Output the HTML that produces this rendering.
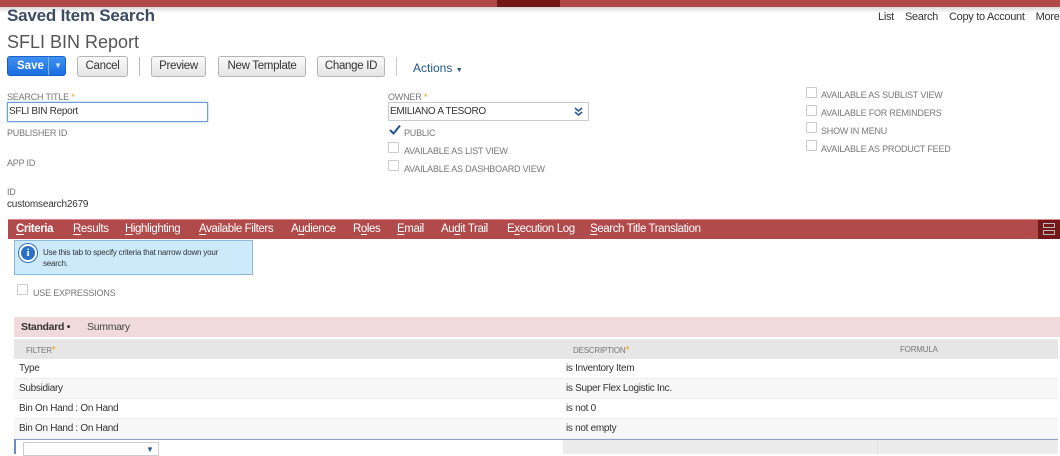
<!DOCTYPE html>
<html><head><style>
*{margin:0;padding:0;box-sizing:border-box}
body{width:1060px;height:454px;overflow:hidden;background:#fff;font-family:"Liberation Sans",sans-serif;position:relative;color:#333}
.a{position:absolute;white-space:nowrap}
.lbl{font-size:9px;color:#777;letter-spacing:-.2px}
.btn{position:absolute;top:56px;height:21px;border:1px solid #b5b5b5;border-radius:3px;background:linear-gradient(#fafafa,#e5e5e5);font-size:11.5px;color:#333;text-align:center;line-height:19px;letter-spacing:-.3px}
.cb{position:absolute;width:11px;height:11px;border:1px solid #ccc;border-radius:1px;background:#fff}
.tab{position:absolute;top:223px;font-size:11.5px;color:#fff;letter-spacing:-.4px}
.tab u{text-decoration-thickness:1px;text-underline-offset:2px}
.row{position:absolute;left:14px;width:1044px;height:20px;font-size:10px;color:#333;letter-spacing:-.3px;border-bottom:1px solid #eee}
.row span{position:absolute;top:4px}
</style></head><body>
<div class="a" style="left:0;top:0;width:1060px;height:7px;background:#b04a4b"></div>
<div class="a" style="left:497px;top:0;width:63px;height:7px;background:#741718"></div>
<div class="a" style="left:0;top:7px;width:1060px;height:6px;background:linear-gradient(#d8d8d8,#fff)"></div>
<div class="a" style="left:7px;top:6px;font-size:17px;font-weight:bold;color:#3d4c63;letter-spacing:-.2px">Saved Item Search</div>
<div class="a" style="left:878px;top:11px;font-size:11px;color:#333;letter-spacing:-.3px">List&nbsp;&nbsp;&nbsp;&nbsp;Search&nbsp;&nbsp;&nbsp;&nbsp;Copy to Account&nbsp;&nbsp;&nbsp;&nbsp;More</div>
<div class="a" style="left:7px;top:32px;font-size:18px;color:#555">SFLI BIN Report</div>

<div class="a" style="left:7px;top:56px;width:59px;height:20px;border-radius:3px;background:linear-gradient(#3f8ff2,#1a6fe0);border:1px solid #1a62c8"></div>
<div class="a" style="left:48px;top:57px;width:1px;height:18px;background:#7fb3f5"></div>
<div class="a" style="left:17px;top:60px;font-size:11.5px;font-weight:bold;color:#fff">Save</div>
<div class="a" style="left:54px;top:61px;font-size:8px;color:#cfe2fb">▼</div>
<div class="btn" style="left:77px;width:51px">Cancel</div>
<div class="a" style="left:139px;top:57px;width:1px;height:19px;background:#bbb"></div>
<div class="btn" style="left:151px;width:55px">Preview</div>
<div class="btn" style="left:218px;width:88px">New Template</div>
<div class="btn" style="left:317px;width:68px">Change ID</div>
<div class="a" style="left:396px;top:57px;width:1px;height:19px;background:#ccc"></div>
<div class="a" style="left:413px;top:61px;font-size:12px;color:#24558f">Actions <span style="font-size:7px">▼</span></div>

<div class="a lbl" style="left:7px;top:92px">SEARCH TITLE <span style="color:#e8a000">*</span></div>
<div class="a" style="left:7px;top:102px;width:201px;height:20px;border:1px solid #6a9fd8;box-shadow:0 0 2px #8bbbe8"></div>
<div class="a" style="left:9px;top:106px;font-size:10px;color:#333;letter-spacing:-.3px">SFLI BIN Report</div>
<div class="a lbl" style="left:7px;top:128px">PUBLISHER ID</div>
<div class="a lbl" style="left:7px;top:158px">APP ID</div>
<div class="a lbl" style="left:7px;top:187px">ID</div>
<div class="a" style="left:7px;top:199px;font-size:10px;color:#333;letter-spacing:-.2px">customsearch2679</div>

<div class="a lbl" style="left:388px;top:92px">OWNER <span style="color:#e8a000">*</span></div>
<div class="a" style="left:388px;top:102px;width:201px;height:19px;border:1px solid #ccc"></div>
<div class="a" style="left:390px;top:106px;font-size:10px;color:#333;letter-spacing:-.3px">EMILIANO A TESORO</div>
<svg class="a" style="left:574px;top:107px" width="9" height="9" viewBox="0 0 9 9"><path d="M1 1 L4.5 4 L8 1 M1 5 L4.5 8 L8 5" fill="none" stroke="#2a5a9a" stroke-width="1.6"/></svg>
<svg class="a" style="left:389px;top:124px" width="12" height="11" viewBox="0 0 12 11"><path d="M1 6 L4.5 9.5 L11 1.5" fill="none" stroke="#24558f" stroke-width="2"/></svg>
<div class="a lbl" style="left:404px;top:128px">PUBLIC</div>
<div class="cb" style="left:388px;top:142px"></div>
<div class="a lbl" style="left:404px;top:146px">AVAILABLE AS LIST VIEW</div>
<div class="cb" style="left:388px;top:160px"></div>
<div class="a lbl" style="left:404px;top:164px">AVAILABLE AS DASHBOARD VIEW</div>

<div class="cb" style="left:806px;top:87px"></div>
<div class="a lbl" style="left:821px;top:90px">AVAILABLE AS SUBLIST VIEW</div>
<div class="cb" style="left:806px;top:105px"></div>
<div class="a lbl" style="left:821px;top:108px">AVAILABLE FOR REMINDERS</div>
<div class="cb" style="left:806px;top:122px"></div>
<div class="a lbl" style="left:821px;top:126px">SHOW IN MENU</div>
<div class="cb" style="left:806px;top:140px"></div>
<div class="a lbl" style="left:821px;top:144px">AVAILABLE AS PRODUCT FEED</div>

<div class="a" style="left:8px;top:219px;width:1052px;height:20px;background:#b04a4b;border-top:1px solid #d88"></div>
<div class="a" style="left:1038px;top:220px;width:22px;height:19px;background:#741718"></div>
<div class="a" style="left:1043px;top:223px;width:12px;height:5px;border:1px solid #bbb"></div>
<div class="a" style="left:1043px;top:230px;width:12px;height:5px;border:1px solid #bbb"></div>
<div class="tab" style="left:16px;font-weight:bold"><u>C</u>riteria</div>
<div class="tab" style="left:73px"><u>R</u>esults</div>
<div class="tab" style="left:125px"><u>H</u>ighlighting</div>
<div class="tab" style="left:199px"><u>A</u>vailable Filters</div>
<div class="tab" style="left:291px">A<u>u</u>dience</div>
<div class="tab" style="left:353px">R<u>o</u>les</div>
<div class="tab" style="left:397px"><u>E</u>mail</div>
<div class="tab" style="left:441px">Au<u>d</u>it Trail</div>
<div class="tab" style="left:507px">E<u>x</u>ecution Log</div>
<div class="tab" style="left:590px"><u>S</u>earch Title Translation</div>

<div class="a" style="left:14px;top:240px;width:239px;height:35px;background:#cdeafa;border:1px solid #8cb8dc"></div>
<div class="a" style="left:19px;top:244px;width:18px;height:18px;border-radius:50%;background:#2a6fc8;border:2px solid #fff;box-shadow:0 0 0 1px #2a6fc8;color:#fff;font-size:11px;font-weight:bold;text-align:center;line-height:14px;font-family:'Liberation Serif',serif">i</div>
<div class="a" style="left:43px;top:247px;font-size:8px;color:#333;line-height:11px;letter-spacing:-.2px">Use this tab to specify criteria that narrow down your<br>search.</div>

<div class="cb" style="left:17px;top:284px"></div>
<div class="a lbl" style="left:33px;top:288px">USE EXPRESSIONS</div>

<div class="a" style="left:14px;top:317px;width:1046px;height:20px;background:#f0dadb"></div>
<div class="a" style="left:21px;top:321px;font-size:10.5px;font-weight:bold;color:#333;letter-spacing:-.3px">Standard •</div>
<div class="a" style="left:87px;top:321px;font-size:10.5px;color:#444;letter-spacing:-.3px">Summary</div>

<div class="a" style="left:14px;top:339px;width:1044px;height:20px;background:#e6e6e6"></div>
<div class="a lbl" style="left:26px;top:345px;font-size:8px">FILTER<span style="color:#e8a000;font-size:10px">*</span></div>
<div class="a lbl" style="left:573px;top:345px;font-size:8px">DESCRIPTION<span style="color:#e8a000;font-size:10px">*</span></div>
<div class="a lbl" style="left:900px;top:345px;font-size:8px">FORMULA</div>
<div class="row" style="top:359px;background:#fff"><span style="left:5px">Type</span><span style="left:552px">is Inventory Item</span></div>
<div class="row" style="top:379px;background:#f7f7f7"><span style="left:5px">Subsidiary</span><span style="left:552px">is Super Flex Logistic Inc.</span></div>
<div class="row" style="top:399px;background:#fff"><span style="left:5px">Bin On Hand : On Hand</span><span style="left:552px">is not 0</span></div>
<div class="row" style="top:419px;background:#f7f7f7"><span style="left:5px">Bin On Hand : On Hand</span><span style="left:552px">is not empty</span></div>
<div class="a" style="left:14px;top:439px;width:1044px;height:15px;background:#fff;border-top:1px solid #8aa4c8;border-left:2px solid #6a8cc0"></div>
<div class="a" style="left:563px;top:440px;width:495px;height:14px;background:#ececec"></div>
<div class="a" style="left:877px;top:440px;width:1px;height:14px;background:#ddd"></div>
<div class="a" style="left:23px;top:442px;width:136px;height:14px;border:1px solid #ccc;background:#fff"></div>
<div class="a" style="left:146px;top:445px;font-size:8px;color:#2a5a9a">▼</div>
</body></html>
